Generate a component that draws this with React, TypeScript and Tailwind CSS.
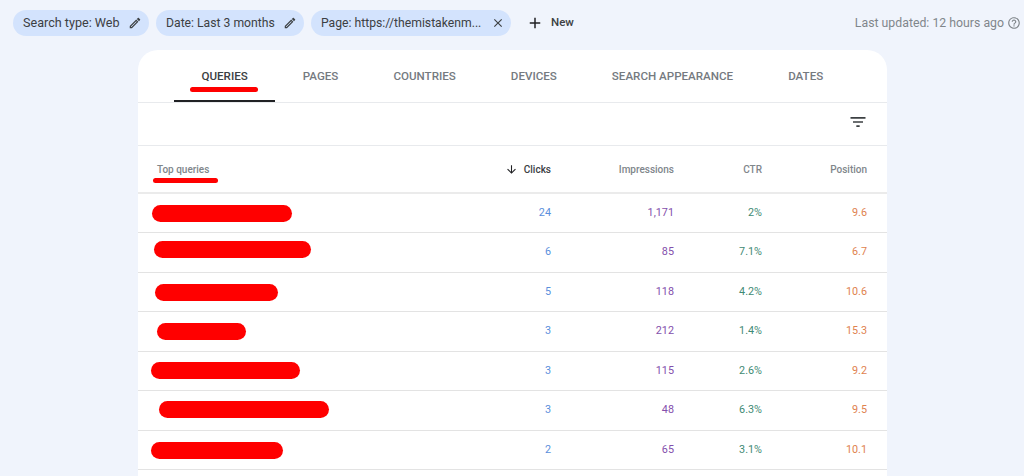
import type { ReactNode } from "react";

const tabs = ["Queries", "Pages", "Countries", "Devices", "Search appearance", "Dates"];

// bar classes keep the redaction scribbles where they sit in each row
const rows = [
  { bar: "ml-[14px] w-[140px] translate-y-[1px]", clicks: "24", impressions: "1,171", ctr: "2%", position: "9.6" },
  { bar: "ml-[16px] w-[157px] translate-y-[-3px]", clicks: "6", impressions: "85", ctr: "7.1%", position: "6.7" },
  { bar: "ml-[17px] w-[123px] translate-y-[1px]", clicks: "5", impressions: "118", ctr: "4.2%", position: "10.6" },
  { bar: "ml-[19px] w-[89px]", clicks: "3", impressions: "212", ctr: "1.4%", position: "15.3" },
  { bar: "ml-[13px] w-[149px]", clicks: "3", impressions: "115", ctr: "2.6%", position: "9.2" },
  { bar: "ml-[21px] w-[170px] translate-y-[-1px]", clicks: "3", impressions: "48", ctr: "6.3%", position: "9.5" },
  { bar: "ml-[13px] w-[132px] translate-y-[1px]", clicks: "2", impressions: "65", ctr: "3.1%", position: "10.1" },
];

function Icon({ d, className }: { d: string; className: string }) {
  return (
    <svg className={className} viewBox="0 0 24 24" fill="currentColor">
      <path d={d} />
    </svg>
  );
}

const editPath =
  "M14.06 9.02l.92.92L5.92 19H5v-.92l9.06-9.06M17.66 3c-.25 0-.51.1-.7.29l-1.83 1.83 3.75 3.75 1.83-1.83c.39-.39.39-1.02 0-1.41l-2.34-2.34c-.2-.2-.45-.29-.71-.29zm-3.6 3.19L3 17.25V21h3.75L17.81 9.94l-3.75-3.75z";
const closePath =
  "M19 6.41L17.59 5 12 10.59 6.41 5 5 6.41 10.59 12 5 17.59 6.41 19 12 13.41 17.59 19 19 17.59 13.41 12z";

function Chip({ children, icon, className }: { children: ReactNode; icon: string; className: string }) {
  return (
    <div
      className={`flex h-[26px] items-center justify-between rounded-full bg-[#d3e3fd] pl-[10px] text-[#3c4043] ${className}`}
    >
      <span className="whitespace-nowrap">{children}</span>
      <Icon d={icon} className="h-[14px] w-[14px] shrink-0 text-[#3c4043]" />
    </div>
  );
}

export default function App() {
  return (
    <div className="flex h-[476px] flex-col overflow-hidden bg-[#f0f4fc] font-['Roboto',sans-serif]">
      <div className="flex h-[50px] shrink-0 items-start pl-[13px] pr-[3px] pt-[10px]">
        <div className="flex items-center gap-[7px]">
          <Chip icon={editPath} className="w-[136px] pr-[7px] text-[12.6px]">Search type: Web</Chip>
          <Chip icon={editPath} className="w-[148px] pr-[7px] text-[12.2px]">Date: Last 3 months</Chip>
          <Chip icon={closePath} className="w-[200px] pr-[6px] text-[12.2px]">Page: https://themistakenm...</Chip>
        </div>
        <div className="ml-[15px] flex h-[26px] items-center gap-[7px] text-[11.5px] font-medium text-[#3c4043]">
          <Icon d="M19 13h-6v6h-2v-6H5v-2h6V5h2v6h6v2z" className="h-[18px] w-[18px] text-[#202124]" />
          New
        </div>
        <div className="ml-auto flex h-[26px] items-center gap-[3px] text-[12.3px] text-[#80868b]">
          Last updated: 12 hours ago
          <Icon
            d="M11 18h2v-2h-2v2zm1-16C6.48 2 2 6.48 2 12s4.48 10 10 10 10-4.48 10-10S17.52 2 12 2zm0 18c-4.41 0-8-3.59-8-8s3.59-8 8-8 8 3.59 8 8-3.59 8-8 8zm0-14c-2.21 0-4 1.79-4 4h2c0-1.1.9-2 2-2s2 .9 2 2c0 2-3 1.75-3 5h2c0-2.25 3-2.5 3-5 0-2.21-1.79-4-4-4z"
            className="h-[14px] w-[14px]"
          />
        </div>
      </div>

      <div className="ml-[138px] w-[749px] flex-1 rounded-t-[20px] bg-white">
        <div className="flex h-[53px] border-b border-[#e8eaed] pl-[36px]">
          {tabs.map((tab, i) => (
            <div
              key={tab}
              className={`relative flex h-[52px] items-start px-[27.5px] pt-[19px] text-[11.6px] font-medium uppercase leading-[14px] ${
                i === 0 ? "border-b-2 border-[#202124] text-[#3c4043]" : "text-[#757a7f]"
              }`}
            >
              {tab}
              {i === 0 ? (
                <span className="absolute left-[16px] top-[37px] h-[5px] w-[68px] rounded-full bg-[#ff0000]" />
              ) : null}
            </div>
          ))}
        </div>

        <div className="flex h-[43px] items-center justify-end border-b border-[#e8eaed] pb-[4px] pr-[19px]">
          <Icon d="M10 18h4v-2h-4v2zM3 6v2h18V6H3zm3 7h12v-2H6v2z" className="h-[20px] w-[20px] text-[#3c4043]" />
        </div>

        <div className="grid h-[47.5px] grid-cols-[1fr_100px_123px_88px_105px] items-center border-b-2 border-[#ebebeb] pt-[1px] pr-[20px] text-[10px] font-medium text-[#80868b]">
          <div className="relative pl-[19px]">
            Top queries
            <span className="absolute left-[15px] top-[16px] h-[5px] w-[65px] rounded-full bg-[#ff0000]" />
          </div>
          <div className="flex items-center justify-end gap-[6px] text-[#3c4043]">
            <Icon d="M20 12l-1.41-1.41L13 16.17V4h-2v12.17l-5.58-5.59L4 12l8 8 8-8z" className="h-[13px] w-[13px] text-[#202124]" />
            Clicks
          </div>
          <div className="text-right">Impressions</div>
          <div className="text-right">CTR</div>
          <div className="text-right">Position</div>
        </div>

        {rows.map((row) => (
          <div
            key={row.impressions}
            className="grid h-[39.5px] grid-cols-[1fr_100px_123px_88px_105px] items-center border-b border-[#e3e3e3] pr-[20px] text-right text-[10.8px]"
          >
            <div className="flex">
              <span className={`h-[17px] rounded-full bg-[#ff0000] ${row.bar}`} />
            </div>
            <div className="text-[#5b8fdc]">{row.clicks}</div>
            <div className="text-[#8450ac]">{row.impressions}</div>
            <div className="text-[#3f8a74]">{row.ctr}</div>
            <div className="text-[#e0824f]">{row.position}</div>
          </div>
        ))}
      </div>
    </div>
  );
}
